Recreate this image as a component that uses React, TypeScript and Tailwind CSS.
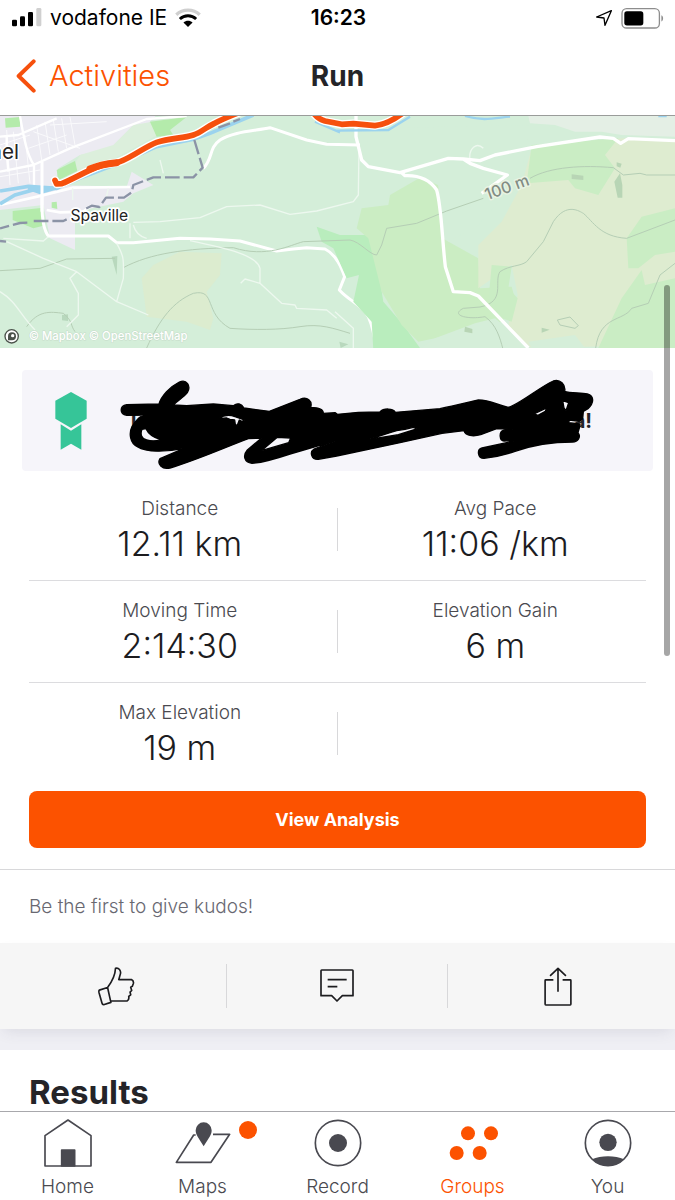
import type { ReactNode } from 'react';

function StatusBar() {
  return (
    <div className="grid h-9 grid-cols-[1fr_auto_1fr] items-center pl-3 pr-2.5 text-black">
      <div className="flex items-center gap-2">
        <svg viewBox="0 0 90 60" className="h-5 w-[30px]" aria-label="Signal strength">
          <rect x="0" y="35" width="15" height="20" rx="4" />
          <rect x="24" y="25" width="15" height="30" rx="4" />
          <rect x="48" y="12" width="15" height="43" rx="4" />
          <rect x="73" y="0" width="15" height="55" rx="4" fill="#d0d0d0" />
        </svg>
        <span className="text-[21px] leading-6">vodafone IE</span>
        <svg viewBox="0 0 80 60" className="h-5 w-[26px]" fill="none" aria-label="Wi-Fi">
          <path d="M4 20C24 1 56 1 76 20" stroke="#cfcfcf" strokeWidth="10" />
          <path d="M15 33C29 20 51 20 65 33" stroke="#000" strokeWidth="9" />
          <path d="M40 58 26 44C34 37 46 37 54 44Z" fill="#000" />
        </svg>
      </div>
      <div className="text-[21px] font-semibold leading-6">16:23</div>
      <div className="flex items-center justify-end gap-2">
        <svg viewBox="0 0 54 54" className="h-[18px] w-[18px]" fill="none" stroke="#000" strokeWidth="4" strokeLinejoin="round" aria-label="Location">
          <path d="M49 5 5 24 27 27 30 49Z" />
        </svg>
        <svg viewBox="0 0 132 64" className="h-[21px] w-11" aria-label="Battery">
          <rect x="2" y="2" width="114" height="59" rx="14" fill="none" stroke="#8d8d8d" strokeWidth="4" />
          <rect x="9" y="10" width="58" height="43" rx="8" />
          <path d="M122 22C129 25 129 38 122 41Z" fill="#8d8d8d" />
        </svg>
      </div>
    </div>
  );
}

function RouteMap() {
  return (
    <svg viewBox="0 33 2025 696" preserveAspectRatio="xMidYMid slice" className="block h-[232px] w-full shrink-0" role="img" aria-label="Route map">
      <rect x="0" y="0" width="2025" height="740" fill="#d4eed9" />
      {/* town */}
      <path d="M0 0H500L440 60 410 100 340 130 240 150 175 190 165 240 380 245 395 200 460 240 400 265 370 290 225 320 225 435 150 400 130 300 0 315Z" fill="#ecebf2" />
      <path d="M240 150 340 120 400 60 560 33 455 100 300 185 200 215Z" fill="#dcefdc" />
      <path d="M15 40 60 36 60 65 17 68Z M450 50 560 36 510 75 520 90 470 95Z M170 195 225 168 232 198 175 225Z M38 318 130 308 130 362 100 370 38 345Z M155 292 170 290 172 312 155 308Z" fill="#b4ebab" />
      <g stroke="#fafafc" strokeWidth="3" fill="none">
        <path d="M20 75 30 240M40 80 55 235M75 90 90 235M110 60 125 165M135 50 150 150M160 45 175 140M185 40 200 130M210 36 225 120M0 120 90 90M0 215 120 195M85 130 200 90M150 60 320 50M100 80 240 130" />
      </g>
      <g stroke="#fff" strokeWidth="9" fill="none" strokeLinejoin="round">
        <path d="M60 33C70 90 80 150 102 180L102 240M0 95 55 90 170 40M0 200 100 180 210 130 440 42 560 33M20 95 20 140 0 150M20 140 25 200" strokeWidth="7" />
        <path d="M126 170V300C126 350 135 380 145 393H325L350 413H400L540 400 630 402 720 408 830 438 880 432 920 428 975 432C1010 450 1025 490 1034 515L1018 555C1050 590 1080 595 1105 635 1120 670 1125 700 1129 735" />
        <path d="M0 300 125 272 220 248 390 246M140 315 180 322 250 320 270 305" strokeWidth="8" />
        <path d="M610 190C640 160 625 130 660 105 700 80 760 78 810 68L920 105 980 118 1080 120" />
      </g>
      {/* land cover */}
      <path d="M460 480 540 440 665 445 660 510 620 560 640 640 630 675 560 650 440 635 425 520Z" fill="#dceccf" />
      <path d="M950 365 1020 390 1100 390 1125 430 1150 590 1210 660 1260 729 1120 735 1115 650 1060 590 1077 510 1040 520 1000 430 965 410Z" fill="#b9edbd" />
      <g transform="translate(1005 0)">
        <path d="M80 310 160 300 165 270 260 215 310 240 322 400 430 460 435 550 530 545 545 600 500 650 300 700 250 710 200 660 140 560 100 400 65 370Z" fill="#cbedc3" />
        <path d="M430 420 500 350 560 240 590 130 860 100 1020 105V720L550 729 520 660 548 570 530 480 430 550Z" fill="#deecd0" />
        <path d="M340 410 430 360 560 210 580 85 790 85 600 60 120 70 70 160 250 215 310 240 330 390Z" fill="#d4eed9" />
        <path d="M590 120 850 100 810 150 840 190 790 270 720 250 700 225 575 235Z M1020 310 920 335 875 400 880 490 910 490 960 450 1020 440Z M920 495 930 540 1020 520V729H790L860 580Z M470 480 530 485 520 550 548 580 530 650 500 640 460 590Z" fill="#caedc4" />
        <path d="M580 33H1020V95L860 90 800 80 720 80 660 60 585 55Z" fill="#e4efe5" />
        <path d="M300 700 420 655 480 640 590 729H260Z M580 710 720 690 750 729H590Z" fill="#d5eed9" />
        <path d="M710 208 745 212V225L710 222ZM838 230 855 205 862 240V278H848ZM845 172 860 176 856 188 845 184ZM390 665 412 672V685L388 680ZM620 668 644 674 620 683Z" fill="#b8d5b5" />
      </g>
      <path d="M335 455 352 453 350 510ZM186 630 204 628V648L186 646ZM1018 710 1045 718 1022 729Z" fill="#b8d8bd" />
      {/* contours */}
      <g stroke="#b5ceb5" strokeWidth="3" fill="none">
        <path d="M0 497 120 490 200 462 345 460M370 488C450 445 560 430 700 428 800 460 870 420 910 410L1050 405C1080 410 1110 450 1130 450L1145 420 1160 370 1250 355 1340 318 1450 280M1590 220C1650 185 1750 180 1840 188L1870 210 1920 205 1940 210H2025" />
        <path d="M80 665C115 615 150 620 190 625 220 650 210 660 225 680M440 729C480 640 520 590 580 565 650 550 610 625 690 670 760 675 840 675 900 665 960 655 1000 670 1050 685M1390 610 1440 606C1520 590 1480 530 1500 500 1530 480 1560 485 1580 470L1630 410 1660 350C1700 290 1740 320 1750 325 1780 350 1800 395 1880 400L2025 345M2025 475 1980 510 1945 595 1895 610C1870 650 1800 630 1787 729M1390 610C1350 630 1400 645 1455 635 1490 660 1500 700 1508 729M1672 645 1710 636 1735 662 1725 670 1680 660Z" />
      </g>
      <g stroke="#edf8ef" fill="none" strokeLinejoin="round">
        <path d="M20 410 130 460 230 500 350 590 445 630M350 415C370 450 372 460 370 520L350 590M230 500 210 520 235 565 235 630 200 665M0 560C50 590 60 630 105 675M390 355V400M400 360C405 380 420 395 440 400M400 352 480 350 600 338 680 305 780 300 870 328 950 318 1060 290 1075 270 1077 120M480 165 490 205M570 407C680 430 770 450 780 490V535L845 595 885 600 890 610 980 615 1010 640M780 535 735 522 722 535M1005 620 1060 670V729M1410 165C1405 130 1430 110 1450 130M218 250V285M325 250 318 280M10 400 130 408 145 395" strokeWidth="4" />
      </g>
      <g stroke="#fff" strokeWidth="10" fill="none" strokeLinejoin="round">
        <path d="M1068 33V95L1085 165 1105 185 1200 203 1345 160 1390 162 1440 167 1485 150 1610 125 1800 96 1840 100 1862 115 1885 101 2025 107M1390 162 1410 175 1450 190 1522 210 1445 265" />
        <path d="M1205 203 1215 212C1260 210 1290 225 1310 255 1325 310 1325 390 1336 485L1360 560 1410 563 1435 573 1585 729" />
      </g>
      {/* rivers */}
      <g stroke="#9bd3ee" strokeWidth="11" fill="none">
        <path d="M0 258 85 244 170 250 250 215 370 170 470 125 580 103 630 85 760 30M0 297 45 270 110 252" />
        <path d="M85 250 165 250 120 262Z" fill="#9bd3ee" />
        <path d="M945 50 1020 82M1010 77 1165 75 1230 35M1395 33C1450 50 1490 38 1530 35M1975 33H2000" strokeWidth="7" />
      </g>
      {/* boundary */}
      <g stroke="#8b93a6" strokeWidth="7" fill="none" strokeLinejoin="round">
        <path d="M583 105 608 188 580 217H460L400 240 395 262 372 278H318L298 306 275 302 250 315M200 343 190 348H98M82 353 60 354 0 370M0 408 18 410" strokeDasharray="44 12" />
        <path d="M655 68 690 55M700 50 720 42" />
      </g>
      <path d="M126 240V320" stroke="#fff" strokeWidth="9" />
      <g fill="none" strokeLinecap="round" strokeLinejoin="round">
        <path d="M165 226 170 237 185 236C220 222 260 197 300 183 320 175 340 177 360 170 400 155 435 125 470 112 510 99 550 100 580 90 605 82 620 65 640 57 670 40 700 30 735 15M930 5C940 30 955 42 975 48L1025 58 1060 56 1125 62C1160 58 1190 40 1220 15" stroke="#fff" strokeWidth="25" />
        <path d="M165 226 170 237 185 236C220 222 260 197 300 183 320 175 340 177 360 170 400 155 435 125 470 112 510 99 550 100 580 90 605 82 620 65 640 57 670 40 700 30 735 15M930 5C940 30 955 42 975 48L1025 58 1060 56 1125 62C1160 58 1190 40 1220 15" stroke="#f6500d" strokeWidth="17" />
        <path d="M270 192C295 180 320 176 350 173" stroke="#f6500d" strokeWidth="21" />
      </g>
      <g fontFamily="Inter, sans-serif" strokeLinejoin="round" paintOrder="stroke">
        <text x="57" y="162" textAnchor="end" fontSize="62" fill="#222" stroke="#fff" strokeWidth="8">nel</text>
        <text x="298" y="349" textAnchor="middle" fontSize="47" fill="#222" stroke="#fff" strokeWidth="10">Spaville</text>
        <text x="1462" y="286" fontSize="48" fontWeight="500" fill="#828c83" stroke="#e8f3e3" strokeWidth="9" transform="rotate(-20 1462 286)">100 m</text>
        <text x="86" y="706" fontSize="34" fontWeight="500" fill="#fff" stroke="#c6dcc9" strokeWidth="3">© Mapbox © OpenStreetMap</text>
      </g>
      <circle cx="35" cy="694" r="20" fill="#fff" stroke="#4b524b" strokeWidth="4" />
      <path d="M24 706V694A12 12 0 1 1 36 706Z" fill="#4b524b" />
      <circle cx="38" cy="692" r="5" fill="#fff" />
    </svg>
  );
}

function AwardBanner() {
  return (
    <section className="relative mx-[22px] mt-[22px] flex h-[101px] shrink-0 items-center justify-between rounded-sm bg-[#f6f5fa] px-[33px]">
      <svg viewBox="0 0 96 174" className="h-[58px] w-8" fill="#36c598" aria-label="Award">
        <path d="M48 0 95 26V80L48 108 1 80V26Z" />
        <path d="M17 97 48 116 79 97V173L48 155 17 173Z" />
      </svg>
      <p className="flex flex-1 justify-between pl-10 pr-7 text-[20px] font-bold leading-6 text-[#242428]">
        <span>T</span>
        <span>a!</span>
      </p>
      <svg viewBox="66 30 1893 303" className="absolute inset-0 h-full w-full" stroke="#000" strokeWidth="4" strokeLinejoin="round">
        <path
          fillRule="evenodd"
          d="M380 134 477 132C484 108 510 80 538 66 560 56 574 78 562 98 550 113 532 122 520 135L560 137 640 132 700 137C712 128 724 130 732 144L808 154 900 118C922 108 938 124 932 142 955 142 970 148 970 160L1005 158 1012 163 1075 157 1140 156C1150 144 1180 144 1186 157L1320 146C1360 138 1400 128 1435 120 1470 120 1490 134 1525 142 1560 132 1620 80 1660 63 1680 56 1698 74 1694 94 1710 100 1740 98 1762 102 1784 108 1782 130 1764 146L1750 154 1748 176 1738 184 1708 180 1706 188 1740 192 1738 204 1734 218C1744 230 1734 246 1718 246 1650 246 1590 258 1545 274 1510 286 1480 292 1452 295 1432 294 1430 268 1446 264L1556 240 1512 243C1498 242 1496 216 1510 211L1540 207 1490 206 1442 224C1420 230 1396 228 1392 212L1326 220 1200 248 1010 288 955 298C934 300 928 276 942 267L1008 242 870 282C840 292 790 308 756 310 732 308 728 286 742 270L785 234 745 236C670 264 590 300 510 324 486 330 470 312 480 296L552 265C500 276 440 278 412 260 390 250 386 220 396 200 404 186 416 172 430 165L380 166C358 162 358 138 380 134ZM426 208C420 222 424 236 440 240 455 244 470 243 482 239 460 232 445 222 438 206ZM784 272 866 248 872 234 832 232ZM655 176C670 166 690 164 705 170L735 180 725 184 718 180 712 196 706 194 704 180 690 178 680 174ZM1108 238 1195 224 1250 207 1240 202 1215 208 1190 212 1170 218ZM1602 162 1640 144 1636 154 1614 166ZM1688 122 1706 128 1698 152 1692 144Z"
        />
      </svg>
    </section>
  );
}

function Stat({ label, value }: { label: string; value: string }) {
  return (
    <div className="flex flex-col items-center">
      <dt className="text-[19px] font-[350] leading-6 text-[#4a4a50]">{label}</dt>
      <dd className="text-[34px] font-[350] leading-[46px] text-[#1c1c1f]">{value}</dd>
    </div>
  );
}

function StatRow({ children, last }: { children: ReactNode; last?: boolean }) {
  return (
    <div className="flex flex-col">
      <div className="relative grid h-[101px] grid-cols-2 pt-[18px]">
        {children}
        <span className="absolute left-1/2 top-[29px] -ml-px h-[43px] w-px bg-[#d8d8da]" />
      </div>
      {!last && <div className="mx-[7px] h-px bg-[#dcdcdf]" />}
    </div>
  );
}

const ThumbIcon = () => (
  <svg viewBox="0 0 110 118" className="h-[39px] w-[37px]" fill="none" stroke="#1c1c1f" strokeWidth="5" strokeLinejoin="round" strokeLinecap="round">
    <path d="M3 70 28 62 38 107 16 114Q12 114 11 109L2 77Q1 72 3 70ZM28 62C41 45 51 28 52 4 62 1 69 11 67 20L62 38H100Q108 42 106 50L103 58 98 61 101 71 96 76 98 84 92 89Q94 100 87 103H39" />
  </svg>
);

const CommentIcon = () => (
  <svg viewBox="0 0 102 102" className="h-[34px] w-[34px]" fill="none" stroke="#1c1c1f" strokeWidth="5" strokeLinejoin="round">
    <path d="M5 3H97Q99 3 99 5V80H67L51 96 35 80H3V5Q3 3 5 3ZM23 32H80M23 53H52" />
  </svg>
);

const ShareIcon = () => (
  <svg viewBox="0 0 84 118" className="h-[39px] w-7" fill="none" stroke="#1c1c1f" strokeWidth="5" strokeLinejoin="round">
    <path d="M42 75V4M18 27 42 4 66 27M28 39H5Q3 39 3 41V112Q3 115 5 115H79Q81 115 81 112V41Q81 39 79 39H56" />
  </svg>
);

const HomeIcon = () => (
  <svg viewBox="0 0 144 144" className="h-12 w-12" fill="none" stroke="#494950" strokeWidth="5" strokeLinejoin="round">
    <path d="M3 50 72 3 141 50V141H3Z" />
    <path d="M53 93H92V141H53Z" fill="#494950" />
  </svg>
);

const MapsIcon = () => (
  <svg viewBox="0 0 168 144" className="h-12 w-14" fill="none" stroke="#494950" strokeWidth="5" strokeLinejoin="round">
    <path d="M62 48H56L4 130H108L164 46H114" />
    <path d="M86 82C70 56 62 48 62 34A24 24 0 0 1 110 34C110 48 102 56 86 82Z" fill="#494950" stroke="none" />
  </svg>
);

const RecordIcon = () => (
  <svg viewBox="0 0 144 144" className="h-12 w-12" fill="none">
    <circle cx="72" cy="72" r="68" stroke="#494950" strokeWidth="5" />
    <circle cx="72" cy="72" r="27" fill="#494950" />
  </svg>
);

const GroupsIcon = () => (
  <svg viewBox="-6 0 156 144" className="h-12 w-[52px]" fill="#fc5200">
    <circle cx="57" cy="43" r="21" />
    <circle cx="126" cy="43" r="21" />
    <circle cx="23" cy="102" r="21" />
    <circle cx="92" cy="102" r="21" />
  </svg>
);

const YouIcon = () => (
  <svg viewBox="0 0 144 144" className="h-12 w-12" fill="none">
    <circle cx="72" cy="72" r="68" stroke="#494950" strokeWidth="5" />
    <circle cx="72" cy="70" r="26" fill="#494950" />
    <path d="M24 121C50 109 94 109 120 121Q98 141 72 141T24 121Z" fill="#494950" />
  </svg>
);

function Tab({ icon, label, active, badge }: { icon: ReactNode; label: string; active?: boolean; badge?: boolean }) {
  return (
    <a href="#" className={`flex flex-col items-center gap-2 pt-[7px] text-[19px] font-[350] leading-6 ${active ? 'text-[#fc5200]' : 'text-[#4a4a50]'}`}>
      <span className="relative">
        {icon}
        {badge && <span className="absolute -right-[26px] top-0.5 h-[18px] w-[18px] rounded-full bg-[#fc5200]" />}
      </span>
      {label}
    </a>
  );
}

export default function App() {
  return (
    <div className="relative flex h-screen flex-col overflow-hidden bg-white font-[Inter,sans-serif] text-[#242428]">
      <StatusBar />
      <header className="grid h-20 shrink-0 grid-cols-[1fr_auto_1fr] items-center border-b border-[#9a9c9a] px-4">
        <a href="#" className="flex items-center gap-3 text-[29px] font-[350] leading-8 text-[#fc5200]">
          <svg viewBox="0 0 63 102" className="h-[34px] w-[21px]" fill="none" stroke="#f6500d" strokeWidth="12" strokeLinecap="round" strokeLinejoin="round">
            <path d="M53 7 8 51 53 95" />
          </svg>
          Activities
        </a>
        <h1 className="text-[28px] font-bold leading-8">Run</h1>
      </header>

      <main className="flex flex-1 flex-col overflow-hidden">
        <RouteMap />
        <AwardBanner />

        <dl className="mx-[22px] mt-2 flex shrink-0 flex-col">
          <StatRow>
            <Stat label="Distance" value="12.11 km" />
            <Stat label="Avg Pace" value="11:06 /km" />
          </StatRow>
          <StatRow>
            <Stat label="Moving Time" value="2:14:30" />
            <Stat label="Elevation Gain" value="6 m" />
          </StatRow>
          <StatRow last>
            <Stat label="Max Elevation" value="19 m" />
          </StatRow>
        </dl>

        <button className="mx-[29px] mt-[7px] h-[57px] shrink-0 rounded-lg bg-[#fc5200] text-[18px] font-bold leading-6 text-white">View Analysis</button>

        <p className="mt-[21px] flex h-[74px] shrink-0 items-center border-t border-[#d8d8da] px-[29px] text-[19px] font-[350] leading-6 text-[#686871]">Be the first to give kudos!</p>

        <div className="shrink-0 bg-[#efeff4] pb-[21px]">
          <div className="grid h-[86px] grid-cols-3 items-center bg-[#f6f6f6] px-[7px] shadow-[0_6px_14px_-4px_rgba(60,60,90,0.12)]">
            <button aria-label="Give kudos" className="flex h-11 items-center justify-center border-r border-[#d8d8da]"><ThumbIcon /></button>
            <button aria-label="Comment" className="flex h-11 items-center justify-center border-r border-[#d8d8da]"><CommentIcon /></button>
            <button aria-label="Share" className="flex h-11 items-center justify-center"><ShareIcon /></button>
          </div>
        </div>

        <h2 className="shrink-0 px-[29px] pt-[22px] text-[33px] font-bold leading-10">Results</h2>
      </main>

      <nav className="grid h-[89px] shrink-0 grid-cols-5 border-t border-[#a8a8ac] bg-white">
        <Tab icon={<HomeIcon />} label="Home" />
        <Tab icon={<MapsIcon />} label="Maps" badge />
        <Tab icon={<RecordIcon />} label="Record" />
        <Tab icon={<GroupsIcon />} label="Groups" active />
        <Tab icon={<YouIcon />} label="You" />
      </nav>

      <div className="absolute right-[5px] top-[285px] h-[371px] w-1.5 rounded-full bg-black/35" />
    </div>
  );
}
